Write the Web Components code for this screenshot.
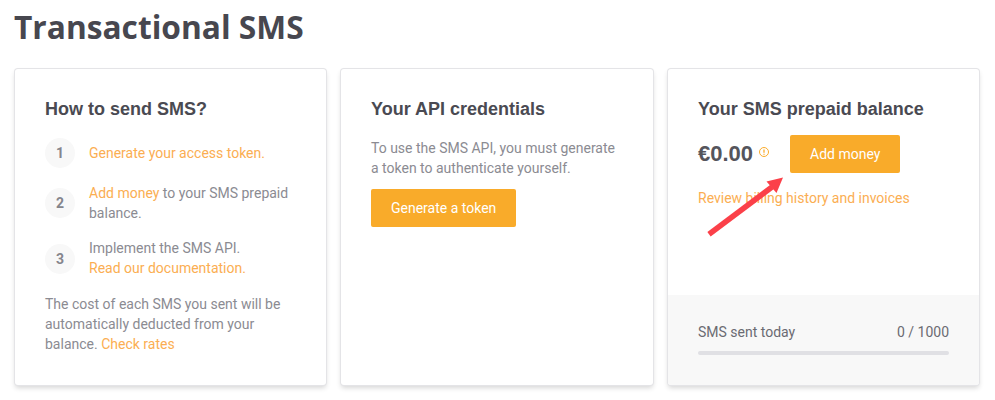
<!DOCTYPE html>
<html>
<head>
<meta charset="utf-8">
<title>Transactional SMS</title>
<style>
  html, body { margin: 0; padding: 0; background: #fff; }
  body { font-family: Roboto, sans-serif; }
</style>
</head>
<body>
<sms-page>
  <sms-card heading="How to send SMS?">
    <sms-step number="1" first><sms-link>Generate your access token.</sms-link></sms-step>
    <sms-step number="2"><sms-link>Add money</sms-link> to your SMS prepaid<br>balance.</sms-step>
    <sms-step number="3" last>Implement the SMS API.<br><sms-link>Read our documentation.</sms-link></sms-step>
    <sms-note>The cost of each SMS you sent will be<br>automatically deducted from your<br>balance. <sms-link>Check rates</sms-link></sms-note>
  </sms-card>
  <sms-card heading="Your API credentials">
    <sms-note spaced>To use the SMS API, you must generate a token to authenticate yourself.</sms-note>
    <sms-button>Generate a token</sms-button>
  </sms-card>
  <sms-card heading="Your SMS prepaid balance">
    <sms-balance amount="€0.00"><sms-button>Add money</sms-button></sms-balance>
    <sms-note><sms-link>Review billing history and invoices</sms-link></sms-note>
    <sms-usage slot="footer" label="SMS sent today" used="0" total="1000"></sms-usage>
  </sms-card>
</sms-page>

<script>
class SmsPage extends HTMLElement {
  constructor() {
    super();
    this.attachShadow({mode: 'open'}).innerHTML = `<style>
      :host { display: block; position: relative; width: 995px; height: 400px; padding: 0 16px 0 14px; box-sizing: border-box; overflow: hidden; }
      h1 { margin: 0; padding-top: 7px; height: 69px; box-sizing: border-box; font: 700 31.7px/40px "Open Sans", sans-serif; color: #47474f; }
      .cards { display: grid; grid-template-columns: 311px 312px 311px; column-gap: 15px; padding-left: 1px; }
      svg { position: absolute; left: 700px; top: 170px; }
    </style>
    <h1>Transactional SMS</h1>
    <div class="cards"><slot></slot></div>
    <svg width="90" height="70" viewBox="0 0 90 70">
      <path d="M9 64.300 L72 17" stroke="#fb4049" stroke-width="5.500" fill="none"/>
      <path d="M83 7.500 L66.500 11.500 L76.500 23 Z" fill="#fb4049"/>
    </svg>`;
  }
}

class SmsCard extends HTMLElement {
  constructor() {
    super();
    this.attachShadow({mode: 'open'}).innerHTML = `<style>
      :host { display: flex; flex-direction: column; height: 316px; box-sizing: border-box; background: #fff; border-radius: 3px; box-shadow: 0 0 0 1px #e4e4e7, 0 3px 5px rgba(0, 0, 0, .16); }
      .body { flex: 1; padding: 29px 30px 0 30px; }
      h2 { margin: 0 0 18px; font: 700 18px/22px "Liberation Sans", Arial, sans-serif; color: #4a4a52; }
      .foot { border-radius: 0 0 3px 3px; overflow: hidden; }
    </style>
    <div class="body"><h2 id="heading"></h2><slot></slot></div>
    <div class="foot"><slot name="footer"></slot></div>`;
    this.shadowRoot.querySelector('#heading').textContent = this.getAttribute('heading');
  }
}

class SmsStep extends HTMLElement {
  constructor() {
    super();
    this.attachShadow({mode: 'open'}).innerHTML = `<style>
      :host { display: flex; align-items: center; gap: 14px; margin-bottom: 15px; font: 400 14px/20px Roboto, sans-serif; color: #8b8b92; }
      :host([first]) { margin-top: 1px; }
      :host([last]) { margin-bottom: 16px; }
      .num { flex: none; width: 30px; height: 30px; border-radius: 50%; background: #f8f8f8; display: flex; align-items: center; justify-content: center; font-weight: 700; color: #85858c; }
      :host([last]) .num { margin-top: 2px; }
      .txt { flex: 1; }
    </style>
    <div class="num" id="num"></div><div class="txt"><slot></slot></div>`;
    this.shadowRoot.querySelector('#num').textContent = this.getAttribute('number');
  }
}

class SmsNote extends HTMLElement {
  constructor() {
    super();
    this.attachShadow({mode: 'open'}).innerHTML = `<style>
      :host { display: block; font: 400 14px/20px Roboto, sans-serif; color: #8b8b92; }
      :host([spaced]) { margin-bottom: 11px; }
    </style><slot></slot>`;
  }
}

class SmsLink extends HTMLElement {
  constructor() {
    super();
    this.attachShadow({mode: 'open'}).innerHTML = `<style>
      :host { display: inline; color: #fbae52; }
    </style><slot></slot>`;
  }
}

class SmsButton extends HTMLElement {
  constructor() {
    super();
    this.attachShadow({mode: 'open'}).innerHTML = `<style>
      :host { display: inline-flex; align-items: center; justify-content: center; height: 38px; padding: 0 20px; background: #f9ab2a; border-radius: 2px; color: #fff; font: 400 14px/20px Roboto, sans-serif; }
    </style><slot></slot>`;
  }
}

class SmsBalance extends HTMLElement {
  constructor() {
    super();
    this.attachShadow({mode: 'open'}).innerHTML = `<style>
      :host { display: flex; align-items: center; margin: -3px 0 15px; color: #45454d; }
      .amount { font: 700 22px/38px "Liberation Sans", Arial, sans-serif; color: #55555c; }
      svg { margin: -4px 21px 0 6px; }
    </style>
    <span class="amount" id="amount"></span>
    <svg width="10" height="10" viewBox="0 0 10 10" fill="none" stroke="#faac2b">
      <circle cx="5" cy="5" r="4.500"/>
      <path d="M5 2.500 V5.800 M5 6.800 V7.800" stroke-width="1.300"/>
    </svg>
    <slot></slot>`;
    this.shadowRoot.querySelector('#amount').textContent = this.getAttribute('amount');
  }
}

class SmsUsage extends HTMLElement {
  constructor() {
    super();
    const used = this.getAttribute('used');
    const total = this.getAttribute('total');
    this.attachShadow({mode: 'open'}).innerHTML = `<style>
      :host { display: block; height: 90px; box-sizing: border-box; padding: 27px 30px 0 30px; background: #f8f8f8; font: 400 14px/20px Roboto, sans-serif; color: #6b6b72; }
      .row { display: flex; justify-content: space-between; margin-bottom: 9px; }
      .bar { height: 4px; border-radius: 2px; background: #e0e0e4; }
    </style>
    <div class="row"><span>${this.getAttribute('label')}</span><span>${used} / ${total}</span></div>
    <div class="bar"></div>`;
  }
}

customElements.define('sms-page', SmsPage);
customElements.define('sms-card', SmsCard);
customElements.define('sms-step', SmsStep);
customElements.define('sms-note', SmsNote);
customElements.define('sms-link', SmsLink);
customElements.define('sms-button', SmsButton);
customElements.define('sms-balance', SmsBalance);
customElements.define('sms-usage', SmsUsage);
</script>
</body>
</html>
